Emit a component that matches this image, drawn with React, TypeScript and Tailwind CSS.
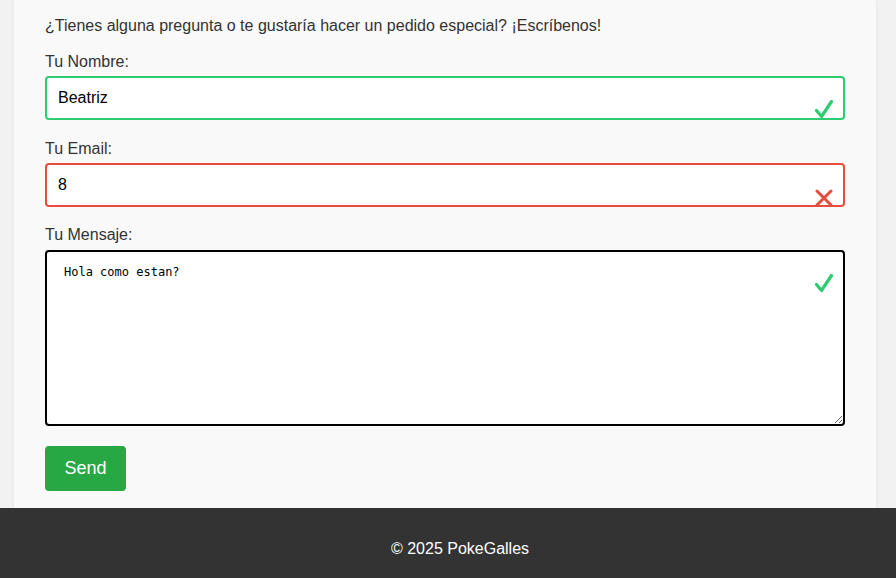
import React from 'react';

function CheckIcon() {
  return (
    <svg width="18" height="19" viewBox="0 0 18 19" className="text-[#2ecc71]">
      <path d="M1.5 10.5 L6.5 16.5 L16.5 1.5" fill="none" stroke="currentColor" strokeWidth="3.2" strokeLinecap="round" strokeLinejoin="round" />
    </svg>
  );
}

function CrossIcon() {
  return (
    <svg width="18" height="18" viewBox="0 0 18 18" className="text-[#e74c3c]">
      <path d="M2 2 L16 16 M16 2 L2 16" fill="none" stroke="currentColor" strokeWidth="3" strokeLinecap="round" />
    </svg>
  );
}

export default function App() {
  return (
    <div className="min-h-screen bg-[#f2f2f2] font-['Liberation_Sans',Arial,sans-serif] text-[#333]">
      <div className="ml-[14px] mr-[20px] bg-[#f9f9f9] px-[31px] pt-[17px] pb-[17px] shadow-[0_0_4px_rgba(0,0,0,0.08)]">
        <p className="text-[16px] leading-[18px]">
          ¿Tienes alguna pregunta o te gustaría hacer un pedido especial? ¡Escríbenos!
        </p>

        <form className="mt-[18px] flex flex-col" onSubmit={(e) => e.preventDefault()}>
          <label className="text-[16px] leading-[18px]">Tu Nombre:</label>
          <div className="relative mt-[5px]">
            <input
              defaultValue="Beatriz"
              className="h-[44px] w-full rounded-[4px] border-2 border-[#2ecc71] bg-white px-[11px] text-[16px] text-black outline-none"
            />
            <span className="absolute right-[12px] bottom-[1px]">
              <CheckIcon />
            </span>
          </div>

          <label className="mt-[20px] text-[16px] leading-[18px]">Tu Email:</label>
          <div className="relative mt-[5px]">
            <input
              defaultValue="8"
              className="h-[44px] w-full rounded-[4px] border-2 border-[#e74c3c] bg-white px-[11px] text-[16px] text-black outline-none"
            />
            <span className="absolute right-[12px] bottom-[0px]">
              <CrossIcon />
            </span>
          </div>

          <label className="mt-[19px] text-[16px] leading-[18px]">Tu Mensaje:</label>
          <div className="relative mt-[6px]">
            <textarea
              defaultValue="Hola como estan?"
              className="block h-[176px] w-full resize-y rounded-[4px] border-2 border-black bg-white px-[17px] pt-[12px] font-['DejaVu_Sans_Mono',monospace] text-[12px] leading-[16px] text-black outline-none"
            />
            <span className="absolute top-[24px] right-[12px]">
              <CheckIcon />
            </span>
          </div>

          <div className="mt-[20px]">
            <button
              type="submit"
              className="h-[45px] w-[81px] rounded-[4px] bg-[#28a745] text-[18px] text-white"
            >
              Send
            </button>
          </div>
        </form>
      </div>

      <footer className="bg-[#333] pt-[32px] pb-[30px] pl-[24px] text-center text-[16px] leading-[18px] text-white">
        © 2025 PokeGalles
      </footer>
    </div>
  );
}
